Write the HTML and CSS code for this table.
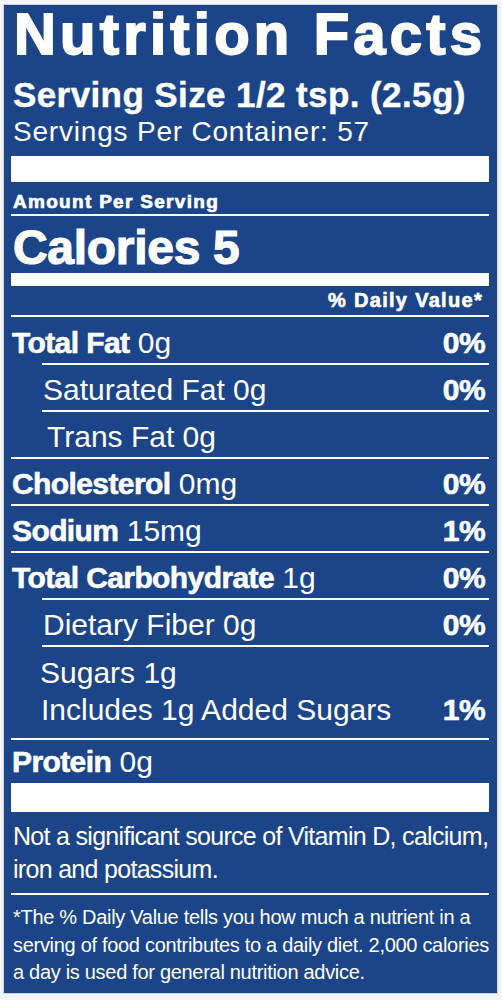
FILE: index.html
```html
<!DOCTYPE html>
<html lang="en">
<head>
  <meta charset="UTF-8" />
  <meta name="viewport" content="width=device-width, initial-scale=1.0"/>
  <title>Nutrition Facts</title>
  <link rel="stylesheet" href="styles.css">
</head>
<body>
  <div class="label">
    <h1 class="title">Nutrition Facts</h1>
    <p class="serving-size">Serving Size 1/2 tsp. (2.5g)</p>
    <p class="servings">Servings Per Container: 57</p>
    <div class="bar"></div>

    <p class="amount">Amount Per Serving</p>
    <p class="calories">Calories 5</p>
    <p class="dv-head">% Daily Value*</p>

    <div class="row first"><span><b>Total Fat</b> 0g</span><b>0%</b></div>
    <div class="row sub"><span>Saturated Fat 0g</span><b>0%</b></div>
    <div class="row sub trans"><span>Trans Fat 0g</span></div>
    <div class="row"><span><b>Cholesterol</b> 0mg</span><b>0%</b></div>
    <div class="row"><span><b>Sodium</b> 15mg</span><b>1%</b></div>
    <div class="row"><span><b>Total Carbohydrate</b> 1g</span><b>0%</b></div>
    <div class="row sub"><span>Dietary Fiber 0g</span><b>0%</b></div>
    <div class="row sub sugars">
      <div class="line sugar">Sugars 1g</div>
      <div class="line added"><span>Includes 1g Added Sugars</span><b>1%</b></div>
    </div>
    <div class="row protein"><span><b>Protein</b> 0g</span></div>
    <div class="bar bar-low"></div>

    <p class="note">Not a significant source of Vitamin D, calcium,<br>iron and potassium.</p>
    <p class="footnote">*The % Daily Value tells you how much a nutrient in a<br>serving of food contributes to a daily diet. 2,000 calories<br>a day is used for general nutrition advice.</p>
  </div>
</body>
</html>
```

FILE: styles.css
```css
body {
  margin: 0;
  font-family: "Liberation Sans", Arial, sans-serif;
  background-color: #f2f5f9;
}
p, h1 {
  margin: 0;
}
b {
  font-weight: bold;
  -webkit-text-stroke: 0.6px #ffffff;
}
.label {
  box-sizing: border-box;
  height: 988px;
  margin: 5px 5px 7px 4px;
  padding: 0 8px 0 7px;
  background-color: #1b4588;
  color: #ffffff;
  box-shadow: 0 0 0 1px #c8d2e2;
}
.title {
  font-size: 58px;
  line-height: 58px;
  font-weight: bold;
  letter-spacing: 4.2px;
  padding-left: 3px;
  -webkit-text-stroke: 1.8px #ffffff;
}
.serving-size {
  margin-top: 14px;
  padding-left: 2px;
  font-size: 35px;
  line-height: 36px;
  font-weight: bold;
  letter-spacing: 0.4px;
  -webkit-text-stroke: 0.4px #ffffff;
}
.servings {
  margin-top: 4px;
  padding-left: 2px;
  font-size: 28px;
  line-height: 30px;
  letter-spacing: 0.8px;
}
.bar {
  height: 26px;
  margin-top: 9px;
  background-color: #ffffff;
}
.amount {
  padding: 7px 0 0 2px;
  font-size: 19px;
  line-height: 25px;
  font-weight: bold;
  letter-spacing: 1.3px;
  -webkit-text-stroke: 0.7px #ffffff;
  border-bottom: 2px solid #ffffff;
}
.calories {
  padding: 6px 0 0 2px;
  font-size: 48px;
  line-height: 51px;
  font-weight: bold;
  letter-spacing: -0.3px;
  -webkit-text-stroke: 1.2px #ffffff;
  border-bottom: 13px solid #ffffff;
}
.dv-head {
  padding-right: 6px;
  font-size: 20px;
  line-height: 29px;
  font-weight: bold;
  text-align: right;
  letter-spacing: 1.3px;
  -webkit-text-stroke: 0.6px #ffffff;
  border-bottom: 2px solid #ffffff;
}
.row {
  display: flex;
  justify-content: space-between;
  padding: 10px 4px 5px 1px;
  font-size: 30px;
  line-height: 30px;
  border-top: 2px solid #ffffff;
  white-space: nowrap;
}
.row b {
  letter-spacing: -0.6px;
}
.row.first {
  padding-top: 11px;
  border-top: 0;
}
.row.sub {
  margin-left: 31px;
}
.row.trans span {
  padding-left: 4px;
}
.row.sugars {
  display: block;
  padding-top: 11px;
  padding-bottom: 13px;
}
.line {
  display: flex;
  justify-content: space-between;
}
.line.sugar {
  margin-left: -3px;
}
.line.added {
  margin-top: 7px;
  margin-left: -2px;
}
.row.protein {
  padding-top: 7px;
  padding-bottom: 6px;
}
.bar-low {
  height: 29px;
  margin-top: 0;
}
.note {
  padding: 8px 0 7px 2px;
  font-size: 25px;
  line-height: 33px;
  letter-spacing: -0.7px;
  white-space: nowrap;
  border-bottom: 2px solid #ffffff;
}
.footnote {
  padding: 9px 0 0 2px;
  font-size: 20px;
  line-height: 27.5px;
  letter-spacing: -0.3px;
  white-space: nowrap;
}
```
